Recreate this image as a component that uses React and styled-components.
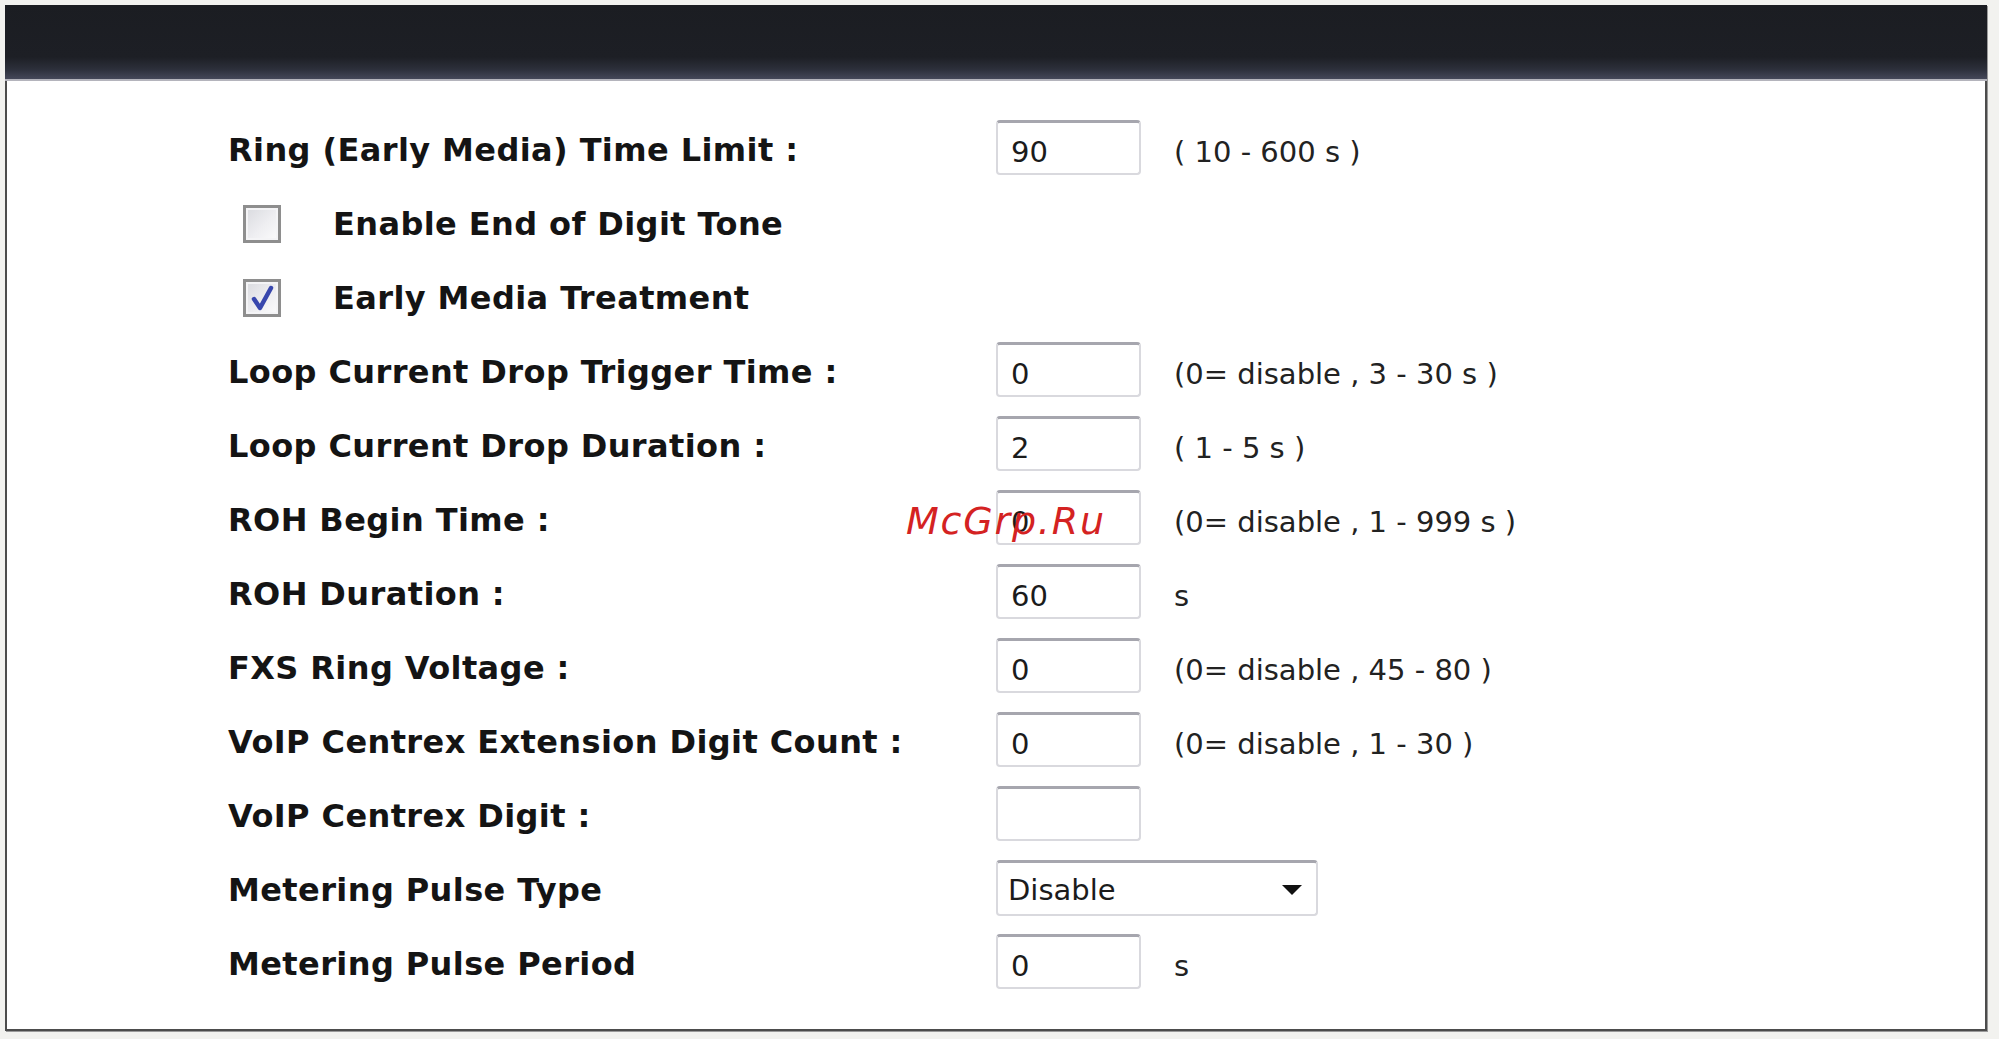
import React from "react";
import styled, { createGlobalStyle } from "styled-components";

const Global = createGlobalStyle`
  html, body { margin: 0; padding: 0; background: #f2f2ef; }
  body { font-family: "DejaVu Sans", Verdana, sans-serif; }
  #root { min-height: 1039px; }
`;

const Page = styled.div`
  padding: 5px 0 0 5px;
  box-sizing: border-box;
`;

const Panel = styled.section`
  width: 1982px;
  height: 1026px;
  box-sizing: border-box;
  border: 2px solid #4c4c4c;
  border-top: none;
  background: #fff;
  display: flex;
  flex-direction: column;
  position: relative;
  box-shadow: 1px 1px 0 #9a9a9a;
`;

const Header = styled.div`
  height: 76px;
  margin: 0 -2px;
  box-sizing: border-box;
  background: linear-gradient(
    to bottom,
    #1b1d22 0px,
    #1d1f25 52px,
    #2c2f3a 64px,
    #454859 74px,
    #b4b4bc 74px,
    #b4b4bc 76px
  );
`;

const Form = styled.div`
  display: flex;
  flex-direction: column;
  padding: 32px 0 0 221px;
`;

const Row = styled.div`
  display: flex;
  align-items: center;
  height: 74px;
`;

const Label = styled.div`
  width: 768px;
  flex: none;
  font-family: "DejaVu Sans", Verdana, sans-serif;
  font-weight: bold;
  font-size: 32px;
  color: #141414;
  white-space: nowrap;
  letter-spacing: 0.4px;
`;

const CheckLabel = styled.label`
  display: flex;
  align-items: center;
  padding-left: 15px;
  font-family: "DejaVu Sans", Verdana, sans-serif;
  font-weight: bold;
  font-size: 32px;
  color: #141414;
  white-space: nowrap;
  letter-spacing: 0.4px;
`;

const Box = styled.span`
  width: 38px;
  height: 38px;
  box-sizing: border-box;
  border: 3px solid #8e8e8e;
  background: linear-gradient(135deg, #d9dadf 0%, #eeeef1 55%, #fbfbfc 100%);
  box-shadow: inset 0 0 0 2px #f4f4f6;
  margin-right: 52px;
  display: flex;
  align-items: center;
  justify-content: center;
  flex: none;
`;

const Input = styled.input`
  width: 145px;
  height: 55px;
  margin-bottom: 6px;
  box-sizing: border-box;
  border: 2px solid #d9d9de;
  border-top: 3px solid #a6a6ae;
  border-radius: 4px;
  padding: 8px 0 0 13px;
  font-family: "DejaVu Sans", Tahoma, sans-serif;
  font-size: 29px;
  color: #1b1b1b;
  background: #fff;
  outline: none;
  flex: none;
`;

const Select = styled.div`
  width: 322px;
  height: 56px;
  margin-bottom: 4px;
  box-sizing: border-box;
  border: 2px solid #d9d9de;
  border-top: 3px solid #a6a6ae;
  border-radius: 4px;
  padding: 2px 13px 0 10px;
  display: flex;
  align-items: center;
  justify-content: space-between;
  font-family: "DejaVu Sans", Tahoma, sans-serif;
  font-size: 29px;
  color: #1b1b1b;
  flex: none;
`;

const Hint = styled.span`
  margin-left: 33px;
  margin-top: 4px;
  font-family: "DejaVu Sans", Tahoma, sans-serif;
  font-size: 29px;
  color: #222;
  white-space: nowrap;
`;

const Watermark = styled.div`
  position: absolute;
  left: 899px;
  top: 494px;
  font-family: "DejaVu Sans", sans-serif;
  font-style: italic;
  font-size: 38px;
  letter-spacing: 1.8px;
  color: #d42222;
  pointer-events: none;
`;

const Check = () => (
  <svg width="26" height="28" viewBox="0 0 26 28">
    <path
      d="M5 15 L11 24 L22 4"
      fill="none"
      stroke="#3847ad"
      strokeWidth="4.5"
      strokeLinecap="round"
      strokeLinejoin="round"
    />
  </svg>
);

const Arrow = () => (
  <svg width="22" height="12" viewBox="0 0 22 12">
    <path d="M1 1 H21 L11 11 Z" fill="#111" />
  </svg>
);

const fields = [
  { type: "input", label: "Ring (Early Media) Time Limit :", value: "90", hint: "( 10 - 600 s )" },
  { type: "check", label: "Enable End of Digit Tone", checked: false },
  { type: "check", label: "Early Media Treatment", checked: true },
  { type: "input", label: "Loop Current Drop Trigger Time :", value: "0", hint: "(0= disable , 3 - 30 s )" },
  { type: "input", label: "Loop Current Drop Duration :", value: "2", hint: "( 1 - 5 s )" },
  { type: "input", label: "ROH Begin Time :", value: "0", hint: "(0= disable , 1 - 999 s )" },
  { type: "input", label: "ROH Duration :", value: "60", hint: "s" },
  { type: "input", label: "FXS Ring Voltage :", value: "0", hint: "(0= disable , 45 - 80 )" },
  { type: "input", label: "VoIP Centrex Extension Digit Count :", value: "0", hint: "(0= disable , 1 - 30 )" },
  { type: "input", label: "VoIP Centrex Digit :", value: "" },
  { type: "select", label: "Metering Pulse Type", value: "Disable" },
  { type: "input", label: "Metering Pulse Period", value: "0", hint: "s" },
];

export default function App() {
  return (
    <>
      <Global />
      <Page>
        <Panel>
          <Header />
          <Form>
            {fields.map((f, i) => {
              if (f.type === "check") {
                return (
                  <Row key={i}>
                    <CheckLabel>
                      <Box>{f.checked && <Check />}</Box>
                      {f.label}
                    </CheckLabel>
                  </Row>
                );
              }
              return (
                <Row key={i}>
                  <Label>{f.label}</Label>
                  {f.type === "select" ? (
                    <Select>
                      <span>{f.value}</span>
                      <Arrow />
                    </Select>
                  ) : (
                    <Input type="text" defaultValue={f.value} />
                  )}
                  {f.hint && <Hint>{f.hint}</Hint>}
                </Row>
              );
            })}
          </Form>
          <Watermark>McGrp.Ru</Watermark>
        </Panel>
      </Page>
    </>
  );
}
